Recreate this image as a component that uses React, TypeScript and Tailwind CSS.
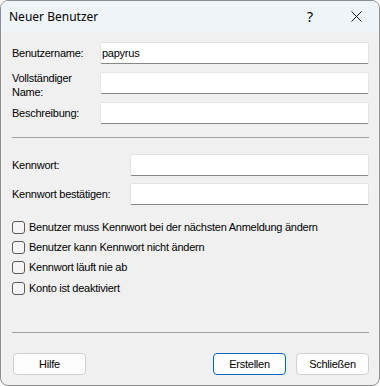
import React from "react";

const font = { fontFamily: '"Liberation Sans", Arial, sans-serif' };

function Field({ value = "" }: { value?: string }) {
  return (
    <div className="flex-1 h-[22px] bg-white border border-[#e4e4e4] border-b-[#868686] rounded-[2px] flex items-center pl-[1px] text-[11px] tracking-[-0.25px] text-black">
      {value}
    </div>
  );
}

function Check({ label }: { label: string }) {
  return (
    <div className="flex items-center h-[20.33px] gap-[4px]">
      <div className="w-[13px] h-[13px] rounded-[3px] border border-[#5a5a5a] bg-[#f5f5f5] shrink-0" />
      <span className="text-[11px] leading-[13px] tracking-[-0.25px] text-black">{label}</span>
    </div>
  );
}

function Button({ label, primary }: { label: string; primary?: boolean }) {
  return (
    <button
      className={
        "w-[73px] h-[22px] rounded-[4px] bg-[#fdfdfd] text-[11px] leading-[13px] tracking-[-0.25px] text-black border " +
        (primary ? "border-[#0067c0]" : "border-[#d0d0d0]")
      }
    >
      {label}
    </button>
  );
}

function Row({ label, width, children }: { label: string; width: string; children: React.ReactNode }) {
  return (
    <div className="flex items-center h-[22px]">
      <div className={width + " text-[11px] leading-[14px] tracking-[-0.25px] text-black pr-[14px]"}>{label}</div>
      {children}
    </div>
  );
}

export default function App() {
  return (
    <div className="w-[380px] h-[386px] bg-white">
      <div className="w-full h-full border border-[#8e8e8e] rounded-[8px] overflow-hidden flex flex-col bg-[#f0f0f0]" style={font}>
        {/* title bar */}
        <div className="h-[31px] bg-[#eff4f9] flex items-center pl-[8px] shrink-0">
          <span className="text-[12px] text-black flex-1" style={{ fontFamily: '"Noto Sans", "Open Sans", sans-serif' }}>
            Neuer Benutzer
          </span>
          <span className="text-[14px] text-black w-[46px] text-center" style={{ fontFamily: '"Noto Sans", sans-serif' }}>
            ?
          </span>
          <div className="w-[46px] flex justify-center">
            <svg width="11" height="11" viewBox="0 0 11 11">
              <path d="M0.5 0.5 L10.5 10.5 M10.5 0.5 L0.5 10.5" stroke="#1a1a1a" strokeWidth="1" />
            </svg>
          </div>
        </div>

        {/* body */}
        <div className="flex-1 flex flex-col pt-[10px] pl-[11px] pr-[10px]">
          <div className="flex flex-col gap-[8px]">
            <Row label="Benutzername:" width="w-[88px]">
              <Field value="papyrus" />
            </Row>
            <Row label="Vollständiger Name:" width="w-[88px] pt-[3px]">
              <Field />
            </Row>
            <Row label="Beschreibung:" width="w-[88px]">
              <Field />
            </Row>
          </div>

          <div className="h-px bg-[#a0a0a0] mt-[13px] shrink-0" />

          <div className="flex flex-col gap-[7px] mt-[16px]">
            <Row label="Kennwort:" width="w-[118px]">
              <Field />
            </Row>
            <Row label="Kennwort bestätigen:" width="w-[118px]">
              <Field />
            </Row>
          </div>

          <div className="flex flex-col mt-[12px]">
            <Check label="Benutzer muss Kennwort bei der nächsten Anmeldung ändern" />
            <Check label="Benutzer kann Kennwort nicht ändern" />
            <Check label="Kennwort läuft nie ab" />
            <Check label="Konto ist deaktiviert" />
          </div>

          <div className="h-px bg-[#a0a0a0] mt-[34px] shrink-0" />

          <div className="flex items-center mt-[20px] pl-[1px]">
            <Button label="Hilfe" />
            <div className="flex-1" />
            <Button label="Erstellen" primary />
            <div className="w-[10px]" />
            <Button label="Schließen" />
          </div>
        </div>
      </div>
    </div>
  );
}
